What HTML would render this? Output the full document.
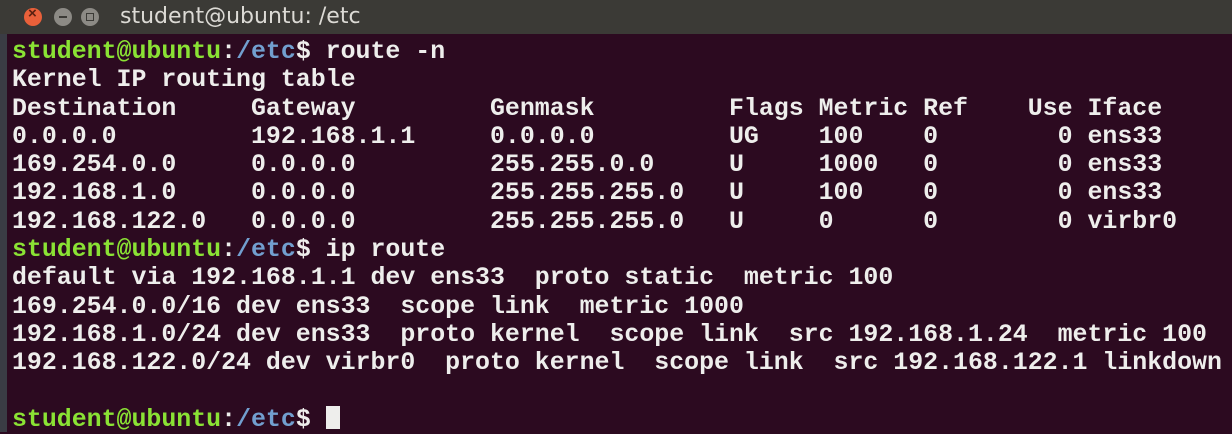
<!DOCTYPE html>
<html><head><meta charset="utf-8"><style>
html,body{margin:0;padding:0;width:1232px;height:432px;overflow:hidden;background:#2c0a20;}
.tb{position:absolute;left:0;top:0;width:1232px;height:34px;background:#3b3a36;}
.strip{position:absolute;left:0;top:34px;width:7px;height:398px;background:#3a3c44;}
.btn{position:absolute;top:8px;width:18px;height:18px;border-radius:50%;}
.title{position:absolute;left:120px;top:4px;font:22px "DejaVu Sans","Liberation Sans",sans-serif;color:#dcdad5;}
pre{position:absolute;left:12px;top:38px;margin:0;font:bold 24.9px/28.3px "Liberation Mono",monospace;color:#eeeeec;white-space:pre;}
.g{color:#8ae234}.b{color:#729fcf}
.cur{display:inline-block;width:14px;height:23px;background:#eeeeec;vertical-align:-3px;}
</style></head><body>
<div class="tb">
<div class="btn" style="left:24px;background:#e9603a;"><span style="position:absolute;left:4px;top:-3px;font:bold 15px 'Liberation Sans';color:#5a2010">×</span></div>
<div class="btn" style="left:54px;background:#8c8a85;"><div style="position:absolute;left:5px;top:8px;width:8px;height:2px;background:#3b3a36"></div></div>
<div class="btn" style="left:81px;background:#8c8a85;"><div style="position:absolute;left:5px;top:5px;width:6px;height:6px;border:1px solid #3b3a36"></div></div>
<div class="title">student@ubuntu: /etc</div>
</div>
<div class="strip"></div>
<pre><span class="g">student@ubuntu</span>:<span class="b">/etc</span>$ route -n
Kernel IP routing table
Destination     Gateway         Genmask         Flags Metric Ref    Use Iface
0.0.0.0         192.168.1.1     0.0.0.0         UG    100    0        0 ens33
169.254.0.0     0.0.0.0         255.255.0.0     U     1000   0        0 ens33
192.168.1.0     0.0.0.0         255.255.255.0   U     100    0        0 ens33
192.168.122.0   0.0.0.0         255.255.255.0   U     0      0        0 virbr0
<span class="g">student@ubuntu</span>:<span class="b">/etc</span>$ ip route
default via 192.168.1.1 dev ens33  proto static  metric 100
169.254.0.0/16 dev ens33  scope link  metric 1000
192.168.1.0/24 dev ens33  proto kernel  scope link  src 192.168.1.24  metric 100
192.168.122.0/24 dev virbr0  proto kernel  scope link  src 192.168.122.1 linkdown

<span class="g">student@ubuntu</span>:<span class="b">/etc</span>$ <span class="cur"></span></pre>
</body></html>
